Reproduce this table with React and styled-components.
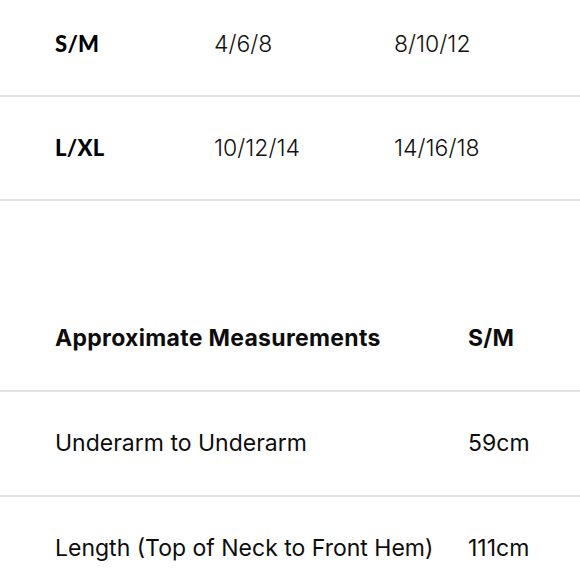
import React from 'react';
import styled, { createGlobalStyle } from 'styled-components';

const GlobalStyle = createGlobalStyle`
	html, body {
		margin: 0;
		padding: 0;
		background: #ffffff;
	}
	body {
		overflow: hidden;
	}
`;

const sizes = [
	['S/M', '4/6/8', '8/10/12'],
	['L/XL', '10/12/14', '14/16/18'],
];

const measurements = [
	['Underarm to Underarm', '59cm'],
	['Length (Top of Neck to Front Hem)', '111cm'],
];

function App() {
	return (
		<Page>
			<GlobalStyle />
			<SizeTable>
				{sizes.map((row) => (
					<SizeRow key={row[0]}>
						<SizeLabel>{row[0]}</SizeLabel>
						<SizeValue>{row[1]}</SizeValue>
						<SizeValue>{row[2]}</SizeValue>
					</SizeRow>
				))}
			</SizeTable>
			<MeasureTable>
				<MeasureRow>
					<MeasureCell bold>Approximate Measurements</MeasureCell>
					<MeasureCell bold>S/M</MeasureCell>
				</MeasureRow>
				{measurements.map((row) => (
					<MeasureRow key={row[0]}>
						<MeasureCell>{row[0]}</MeasureCell>
						<MeasureCell>{row[1]}</MeasureCell>
					</MeasureRow>
				))}
			</MeasureTable>
		</Page>
	);
}

export default App;

const Page = styled.div`
	width: 580px;
	height: 580px;
	overflow: hidden;
	background: #fff;
	color: #111;
`;

const SizeTable = styled.div`
	display: flex;
	flex-direction: column;
	margin-top: -7px;
`;

const SizeRow = styled.div`
	display: grid;
	grid-template-columns: 159px 180px 1fr;
	align-items: center;
	height: 104px;
	padding-left: 55px;
	padding-bottom: 1px;
	border-bottom: 2px solid #e3e3e3;
	box-sizing: border-box;
`;

const SizeLabel = styled.div`
	font-family: 'Lato', 'Liberation Sans', sans-serif;
	font-weight: 900;
	font-size: 22px;
	letter-spacing: 0.3px;
	color: #000;
`;

const SizeValue = styled.div`
	font-family: 'Inter', 'Liberation Sans', sans-serif;
	font-weight: 300;
	font-size: 23px;
	color: #111;
`;

const MeasureTable = styled.div`
	display: flex;
	flex-direction: column;
	margin-top: 86px;
`;

const MeasureRow = styled.div`
	display: grid;
	grid-template-columns: 413px 1fr;
	align-items: center;
	height: 105px;
	padding-left: 55px;
	padding-bottom: 2px;
	border-bottom: 2px solid #e3e3e3;
	box-sizing: border-box;
`;

const MeasureCell = styled.div`
	font-family: 'Inter', 'Liberation Sans', sans-serif;
	font-weight: ${(p) => (p.bold ? 700 : 400)};
	font-size: 23px;
	letter-spacing: ${(p) => (p.bold ? '0.3px' : '0')};
	color: #0d0d0d;
`;
